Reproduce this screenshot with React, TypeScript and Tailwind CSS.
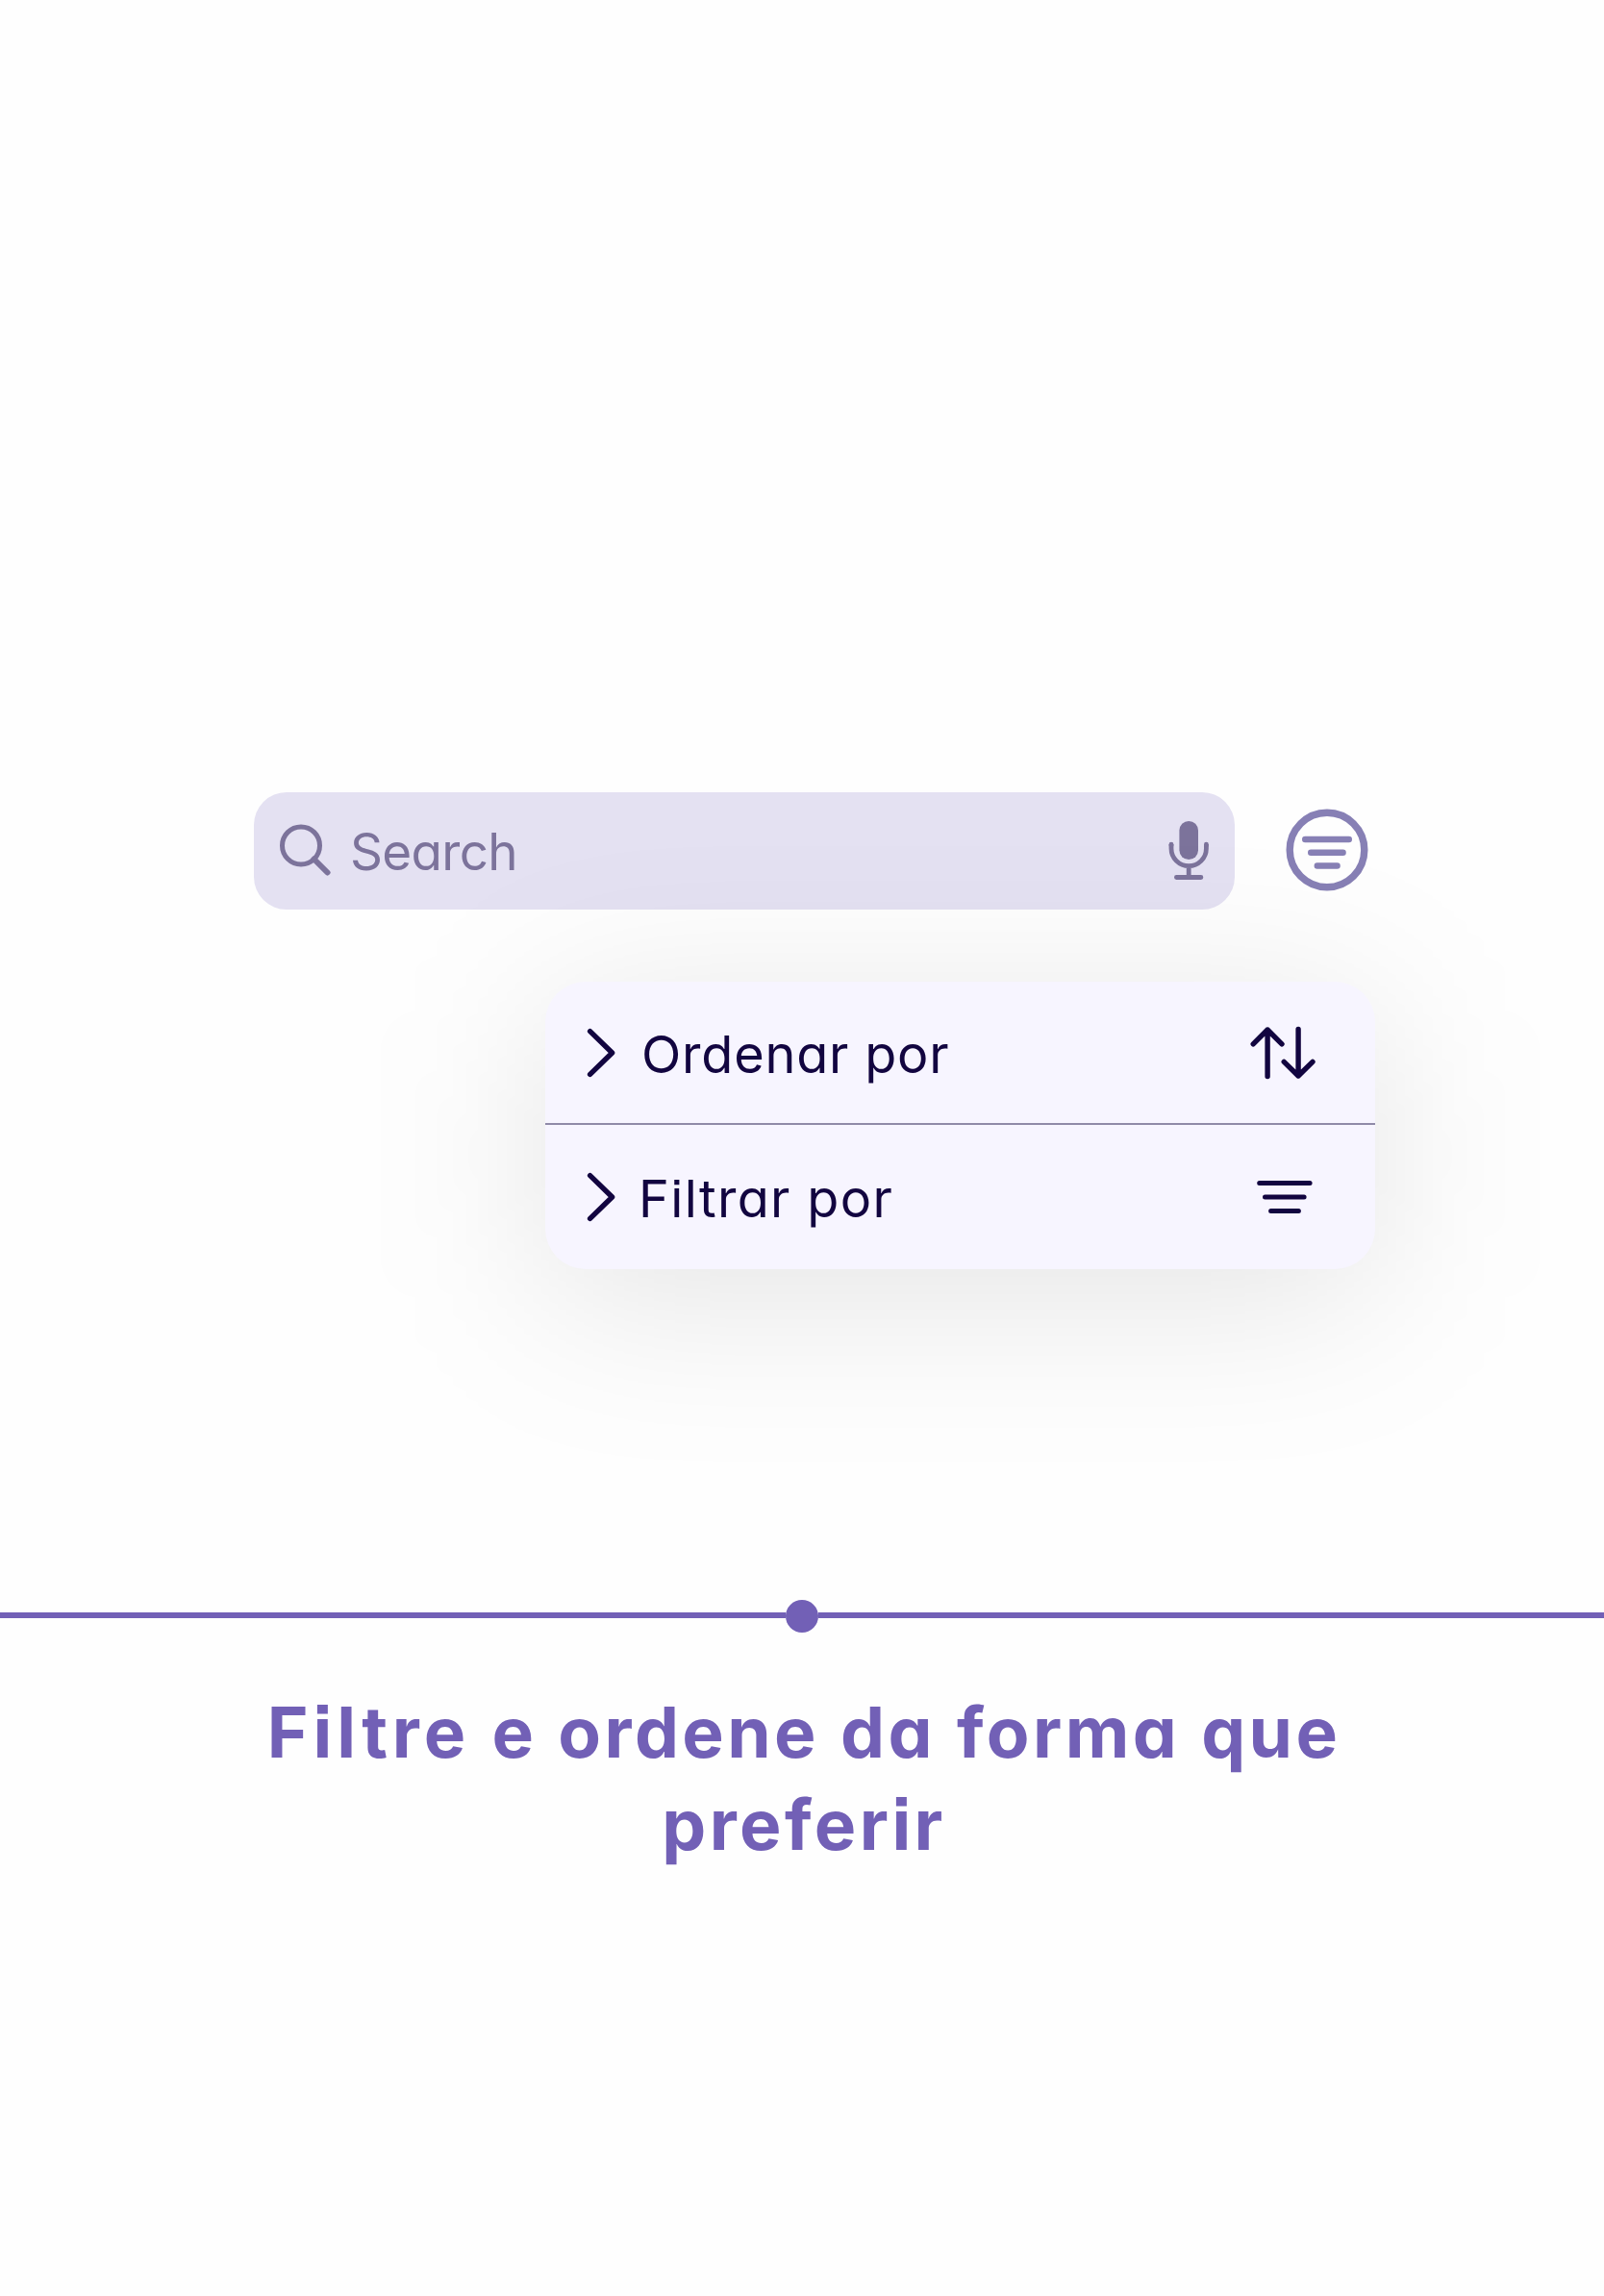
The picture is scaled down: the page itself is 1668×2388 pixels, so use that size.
import React from "react";

const textFont = "font-['Inter','Lato',sans-serif] [font-feature-settings:'cv11','ss07']";

function SearchIcon() {
  return (
    <svg className="block h-[60px] w-[60px] shrink-0" viewBox="0 0 60 60" fill="none" stroke="#7c739b" strokeLinecap="round">
      <circle cx="29" cy="24.4" r="19.5" strokeWidth="5" />
      <path d="M43 39.5 57 53.5" strokeWidth="6" transform="translate(-0.5 -1)" />
    </svg>
  );
}

function MicIcon() {
  return (
    <svg className="block h-[64px] w-[44px]" viewBox="0 0 44 64" fill="none" stroke="#7c739b" strokeLinecap="round">
      <rect x="11.4" y="1" width="19.6" height="40" rx="9.8" fill="#7c739b" stroke="none" />
      <path d="M3 25V29.5a18.2 18.2 0 0 0 36.4 0V25M21.2 48V59" strokeWidth="4.8" strokeLinecap="butt" />
      <path d="M3 25.2v1M39.4 25.2v1M8.4 59.5h25.5" strokeWidth="4.8" />
    </svg>
  );
}

function FilterButton() {
  return (
    <button className="block h-[86px] w-[86px] shrink-0" aria-label="Filtrar">
      <svg className="block h-full w-full" viewBox="0 0 86 86" fill="none" stroke="#8780b5" strokeLinecap="round">
        <circle cx="43" cy="43" r="38.8" strokeWidth="7.4" />
        <path d="M20.2 32h45.6M26.2 45.8h33.4M32.8 59.5h20.8" strokeWidth="6.4" />
      </svg>
    </button>
  );
}

function Chevron() {
  return (
    <svg className="block h-[52px] w-[32px]" viewBox="0 0 32 52" fill="none" stroke="#120540" strokeWidth="5.4" strokeLinecap="round" strokeLinejoin="round">
      <path d="M3.6 3.6 26.6 26 3.6 48.4" />
    </svg>
  );
}

function SortIcon() {
  return (
    <svg className="block h-[60px] w-[70px]" viewBox="0 0 70 60" fill="none" stroke="#120540" strokeWidth="5.4" strokeLinecap="round" strokeLinejoin="round">
      <path d="M3.2 20.8 18.1 6 33 20.8M18.1 6V54.5M50.1 5.5V54M35.2 39.3 50.1 54 65 39.3" />
    </svg>
  );
}

function LinesIcon() {
  return (
    <svg className="block h-[36px] w-[62px]" viewBox="0 0 62 36" fill="none" stroke="#120540" strokeWidth="5" strokeLinecap="round">
      <path d="M3.7 3.4h52.4M9.5 18h40.6M15.6 32.4h28.8" />
    </svg>
  );
}

export default function App() {
  return (
    <main className={`isolate flex h-[2388px] w-[1668px] flex-col overflow-hidden bg-[#fefefe] pt-[824px] ${textFont}`}>
      <div className="ml-[264px] flex h-[122px] items-center">
        <div className="flex h-[122px] w-[1020px] items-center rounded-[34px] bg-[#e4e1f2] pl-5 pr-[25px]">
          <SearchIcon />
          <span className="ml-5 mt-0.5 flex-1 text-[53px] leading-none tracking-[-0.7px] text-[#7c739b]">Search</span>
          <MicIcon />
        </div>
        <div className="-mt-[3px] ml-[53px]">
          <FilterButton />
        </div>
      </div>

      <div className="relative ml-[567px] mt-[75px] h-[299px] w-[863px] text-[54px] font-[430] leading-none text-[#120540]">
        <div className="absolute inset-0 translate-y-[30px] rounded-[42px] bg-black/10 blur-[90px]" />
        <div className="relative rounded-[42px] bg-[#f7f5ff]">
          <div className="flex h-[149px] items-center border-b-2 border-[#8f8aa8] pl-[43px] pr-[60px]">
            <Chevron />
            <span className="ml-[25px] mt-1 flex-1 tracking-[0.8px]">Ordenar por</span>
            <SortIcon />
          </div>
          <div className="flex h-[150px] items-center pl-[43px] pr-[62px]">
            <Chevron />
            <span className="ml-[22px] mt-1 flex-1 tracking-[1.35px]">Filtrar por</span>
            <LinesIcon />
          </div>
        </div>
      </div>

      <div className="mt-[344px] flex h-[34px] items-center">
        <div className="-mt-0.5 h-[6px] flex-1 bg-[#7260b6]" />
        <div className="h-[34px] w-[34px] rounded-full bg-[#7260b6]" />
        <div className="-mt-0.5 h-[6px] flex-1 bg-[#7260b6]" />
      </div>

      <h1 className="mt-[56px] pl-1 text-center text-[73px] font-[660] leading-[96px] tracking-[3.4px] text-[#7260b6] [word-spacing:1.4px]">
        <span className="block">
          <span className="tracking-[5px]">Filtre</span> e ordene da forma que
        </span>
        <span className="block">preferir</span>
      </h1>
    </main>
  );
}
